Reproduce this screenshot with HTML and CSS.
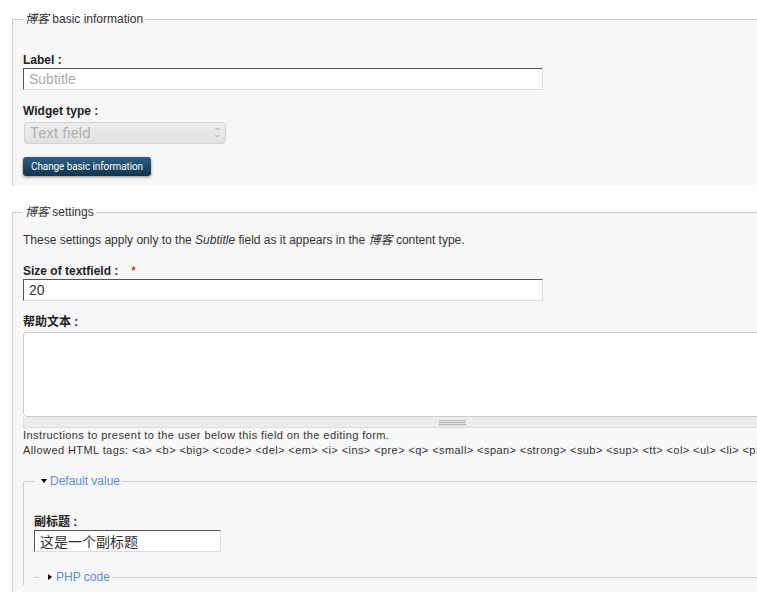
FILE: index.html
```html
<!DOCTYPE html>
<html lang="zh">
<head>
  <meta charset="UTF-8">
  <title>Subtitle field settings</title>
  <link rel="stylesheet" href="styles.css">
</head>
<body>
  <div class="page">
    <fieldset class="group basic">
      <legend><em>博客</em> basic information</legend>
      <div class="form-item">
        <label for="edit-label">Label :</label>
        <input type="text" id="edit-label" class="form-text wide" placeholder="Subtitle">
      </div>
      <div class="form-item">
        <label for="edit-widget">Widget type :</label>
        <div class="select-wrap">
          <select id="edit-widget" disabled>
            <option>Text field</option>
          </select>
          <span class="select-arrows">
            <svg width="5" height="11" viewBox="0 0 5 11"><path d="M0.5 3 L2.5 1 L4.5 3 M0.5 8 L2.5 10 L4.5 8" fill="none" stroke="#a8a8a8" stroke-width="1"/></svg>
          </span>
        </div>
      </div>
      <button type="button" class="btn">Change basic information</button>
    </fieldset>

    <fieldset class="group">
      <legend><em>博客</em> settings</legend>
      <p class="intro">These settings apply only to the <em>Subtitle</em> field as it appears in the <em>博客</em> content type.</p>
      <div class="form-item">
        <label for="edit-size">Size of textfield :<span class="required">*</span></label>
        <input type="text" id="edit-size" class="form-text wide" value="20">
      </div>
      <div class="form-item">
        <label for="edit-help">帮助文本 :</label>
        <div class="resizable">
          <textarea id="edit-help"></textarea>
          <div class="grippie"></div>
        </div>
        <div class="description">
          Instructions to present to the user below this field on the editing form.<br>
          Allowed HTML tags: &lt;a&gt; &lt;b&gt; &lt;big&gt; &lt;code&gt; &lt;del&gt; &lt;em&gt; &lt;i&gt; &lt;ins&gt; &lt;pre&gt; &lt;q&gt; &lt;small&gt; &lt;span&gt; &lt;strong&gt; &lt;sub&gt; &lt;sup&gt; &lt;tt&gt; &lt;ol&gt; &lt;ul&gt; &lt;li&gt; &lt;p&gt; &lt;br&gt; &lt;img&gt;
        </div>
      </div>

      <fieldset class="group inner">
        <legend><a href="#" class="toggle open">Default value</a></legend>
        <div class="form-item">
          <label for="edit-default">副标题 :</label>
          <input type="text" id="edit-default" class="form-text short" value="这是一个副标题">
        </div>
        <fieldset class="group collapsed">
          <legend><a href="#" class="toggle closed">PHP code</a></legend>
        </fieldset>
      </fieldset>
    </fieldset>
  </div>
</body>
</html>
```

FILE: styles.css
```css
html, body {
  overflow: hidden;
}

body {
  margin: 0;
  background: #fff;
  color: #333;
  font-family: "Liberation Sans", Arial, "Noto Sans CJK SC", sans-serif;
  font-size: 12px;
  line-height: 16px;
}

.page {
  width: 1000px;
  padding: 11px 0 0 12px;
}

.group {
  margin: 0 0 18px;
  padding: 12px 10px 10px;
  border: 1px solid #ccc;
  border-bottom: 0;
  background: #f7f7f7;
  min-width: 0;
}

.group legend {
  padding: 0 2px;
  line-height: 16px;
}

.basic {
  padding-top: 25px;
}

.form-item {
  margin-bottom: 13px;
}

.form-item label {
  display: block;
  font-weight: bold;
  color: #222;
}

.form-text {
  display: block;
  box-sizing: border-box;
  height: 22px;
  margin: 0;
  padding: 0 5px;
  border: 1px solid #ddd;
  border-top-color: #555;
  border-left-color: #555;
  background: #fff;
  color: #333;
  font-family: "Liberation Sans", Arial, "Noto Sans CJK SC", sans-serif;
  font-size: 14px;
}

.form-text::placeholder {
  color: #aaa;
}

.wide {
  width: 520px;
}

.short {
  width: 187px;
}

.select-wrap {
  position: relative;
  width: 202px;
  margin: 3px 0 0 1px;
}

.select-wrap select {
  display: block;
  box-sizing: border-box;
  width: 100%;
  height: 22px;
  margin: 0;
  padding: 0 5px;
  -webkit-appearance: none;
  appearance: none;
  border: 1px solid #d4d4d4;
  border-radius: 3px;
  background: linear-gradient(#ededed, #e2e2e2);
  color: #b0b0b0;
  opacity: 1;
  font-family: Roboto, "Open Sans", sans-serif;
  font-size: 15px;
}

.select-arrows {
  position: absolute;
  right: 6px;
  top: 5px;
  line-height: 0;
}

.btn {
  display: block;
  width: 128px;
  height: 19px;
  margin: 0;
  padding: 0;
  border: 0;
  border-radius: 3px;
  background: linear-gradient(#2c5f82, #0e3452);
  box-shadow: 0 1px 3px rgba(0, 0, 0, 0.45);
  color: #fff;
  font-family: Roboto, "Open Sans", sans-serif;
  font-size: 10px;
  letter-spacing: -0.1px;
  cursor: pointer;
}

.intro {
  margin: 0 0 15px;
}

.required {
  margin-left: 13px;
  color: #c00;
  font-weight: normal;
}

.resizable {
  width: 858px;
  margin-top: 2px;
}

.resizable textarea {
  display: block;
  box-sizing: border-box;
  width: 100%;
  height: 85px;
  margin: 0;
  border: 1px solid #ccc;
  border-radius: 4px;
  background: #fff;
  resize: none;
}

.grippie {
  box-sizing: border-box;
  height: 11px;
  border: 1px solid #ddd;
  border-top: 0;
  background: repeating-linear-gradient(#b9b9b9 0 1px, #e2e2e2 1px 2px) center 3px / 27px 6px no-repeat, #ececec;
}

.description {
  margin-top: 0;
  font-size: 11px;
  line-height: 15px;
  letter-spacing: 0.42px;
  white-space: nowrap;
}

.inner {
  margin: 15px 0 0;
  padding: 25px 10px 0;
}

.collapsed {
  margin: 17px 0 0;
  padding: 0 0 0 5px;
  border-left: 0;
  border-right: 0;
  background: transparent;
}

.toggle {
  color: #5b8dd6;
  text-decoration: none;
}

.toggle::before {
  content: "";
  display: inline-block;
  width: 0;
  height: 0;
  vertical-align: middle;
}

.toggle.open::before {
  margin: 0 3px 2px 5px;
  border-left: 3.5px solid transparent;
  border-right: 3.5px solid transparent;
  border-top: 4px solid #000;
}

.toggle.closed::before {
  margin: 0 4px 2px 7px;
  border-top: 3.5px solid transparent;
  border-bottom: 3.5px solid transparent;
  border-left: 4px solid #000;
}
```
